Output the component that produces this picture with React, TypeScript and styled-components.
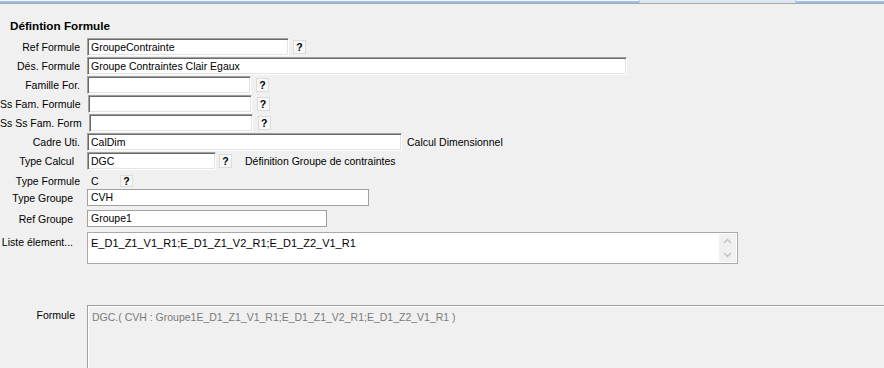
import React from 'react';
import styled, { createGlobalStyle } from 'styled-components';

const GlobalStyle = createGlobalStyle`
    html, body {
        margin: 0;
        padding: 0;
        background: #f0f0f0;
        overflow: hidden;
    }
    body {
        font-family: 'Liberation Sans', Arial, sans-serif;
        font-size: 10.5px;
        color: #000;
    }
`;

const Screen = styled.div`
    width: 884px;
    height: 368px;
    display: flex;
    flex-direction: column;
    background: #f0f0f0;
    overflow: hidden;
`;

const TabStrip = styled.div`
    display: flex;
    height: 3px;
    border-bottom: 1px solid #a7a7a7;
    flex-shrink: 0;
`;

const StripLine = styled.div<{ $width?: number }>`
    flex: ${p => (p.$width ? `0 0 ${p.$width}px` : '1 1 auto')};
    border-top: 1px solid #f7f7f7;
    background: #9dbff0;
`;

const StripTab = styled.div`
    flex: 0 0 155px;
    background: #dde7f3;
    border-left: 1px solid #b8cde6;
    border-right: 1px solid #b8cde6;
`;

const Title = styled.div`
    font-weight: bold;
    font-size: 11.7px;
    padding: 15px 0 0 10px;
    height: 19px;
    line-height: 14px;
`;

const Form = styled.div`
    display: flex;
    flex-direction: column;
`;

const Row = styled.div<{ $top: number; $height?: number }>`
    display: flex;
    align-items: center;
    margin-top: ${p => p.$top}px;
    height: ${p => p.$height ?? 18}px;
`;

const Label = styled.div<{ $shift?: number }>`
    flex: 0 0 80px;
    box-sizing: border-box;
    padding-right: ${p => p.$shift ?? 0}px;
    text-align: right;
    white-space: nowrap;
    margin-right: 7px;
`;

const SunkenField = styled.div<{ $width: number }>`
    box-sizing: border-box;
    width: ${p => p.$width}px;
    height: 18px;
    background: #fff;
    border: 1px solid;
    border-color: #a0a0a0 #ffffff #ffffff #a0a0a0;
    box-shadow: inset 1px 1px 0 #696969, inset -1px -1px 0 #e3e3e3;
    padding: 0 0 0 3px;
    line-height: 16px;
    white-space: nowrap;
    overflow: hidden;
`;

const FlatField = styled.div<{ $width: number }>`
    box-sizing: border-box;
    width: ${p => p.$width}px;
    height: 17px;
    background: #fff;
    border: 1px solid #a0a0a0;
    padding: 0 0 0 3px;
    line-height: 15px;
    white-space: nowrap;
`;

const HelpButton = styled.div<{ $gap: number; $small?: boolean }>`
    box-sizing: border-box;
    margin-left: ${p => p.$gap}px;
    width: 13px;
    height: ${p => (p.$small ? 12 : 14)}px;
    background: #f7f7f7;
    border: 1px solid #dcdcdc;
    font-weight: bold;
    font-size: 10.5px;
    line-height: ${p => (p.$small ? 10 : 12)}px;
    text-align: center;
`;

const Caption = styled.div<{ $gap: number }>`
    margin-left: ${p => p.$gap}px;
    white-space: nowrap;
`;

const Value = styled.div`
    width: 29px;
    padding-left: 4px;
    box-sizing: border-box;
`;

const ListRow = styled.div`
    display: flex;
    align-items: flex-start;
    margin-top: 5px;
`;

const ListLabel = styled(Label)`
    padding-top: 4px;
`;

const ListBox = styled.div`
    box-sizing: border-box;
    width: 651px;
    height: 32px;
    background: #fff;
    border: 1px solid #a9a9a9;
    display: flex;
`;

const ListText = styled.div`
    flex: 1;
    font-size: 11px;
    padding: 3px 0 0 3px;
    line-height: 14px;
`;

const Scroller = styled.div`
    width: 17px;
    margin: 1px 1px 1px 0;
    background: #f0f0f0;
    display: flex;
    flex-direction: column;
    align-items: center;
    justify-content: space-around;
`;

const FormuleRow = styled.div`
    display: flex;
    align-items: flex-start;
    margin-top: 41px;
    flex: 1;
`;

const FormuleLabel = styled(Label)`
    padding-top: 4px;
`;

const FormuleBox = styled.div`
    flex: 1;
    align-self: stretch;
    border-top: 1px solid #a0a0a0;
    border-left: 1px solid #a0a0a0;
    box-shadow: inset 1px 1px 0 #ffffff;
    padding: 4px 0 0 4px;
    color: #7a7a7a;
    white-space: nowrap;
    line-height: 14px;
`;

const Chevron = ({ up }: { up?: boolean }) => (
    <svg width="9" height="6" viewBox="0 0 9 6">
        <path
            d={up ? 'M1 5 L4.5 1.5 L8 5' : 'M1 1 L4.5 4.5 L8 1'}
            fill="none"
            stroke="#c2c2c2"
            strokeWidth="1.4"
        />
    </svg>
);

export default function App() {
    return (
        <Screen>
            <GlobalStyle />
            <TabStrip>
                <StripLine $width={639} />
                <StripTab />
                <StripLine />
            </TabStrip>
            <Title>Défintion Formule</Title>
            <Form>
                <Row $top={0}>
                    <Label>Ref Formule</Label>
                    <SunkenField $width={202}>GroupeContrainte</SunkenField>
                    <HelpButton $gap={4}>?</HelpButton>
                </Row>
                <Row $top={1}>
                    <Label>Dés. Formule</Label>
                    <SunkenField $width={540}>Groupe Contraintes Clair Egaux</SunkenField>
                </Row>
                <Row $top={1}>
                    <Label>Famille For.</Label>
                    <SunkenField $width={164}></SunkenField>
                    <HelpButton $gap={5}>?</HelpButton>
                </Row>
                <Row $top={1}>
                    <Label>Ss Fam. Formule</Label>
                    <SunkenField $width={164}></SunkenField>
                    <HelpButton $gap={5}>?</HelpButton>
                </Row>
                <Row $top={1}>
                    <Label>Ss Ss Fam. Form</Label>
                    <SunkenField $width={164}></SunkenField>
                    <HelpButton $gap={5}>?</HelpButton>
                </Row>
                <Row $top={1}>
                    <Label>Cadre Uti.</Label>
                    <SunkenField $width={315}>CalDim</SunkenField>
                    <Caption $gap={5}>Calcul Dimensionnel</Caption>
                </Row>
                <Row $top={1}>
                    <Label $shift={6}>Type Calcul</Label>
                    <SunkenField $width={129}>DGC</SunkenField>
                    <HelpButton $gap={3}>?</HelpButton>
                    <Caption $gap={13}>Définition Groupe de contraintes</Caption>
                </Row>
                <Row $top={3} $height={16}>
                    <Label>Type Formule</Label>
                    <Value>C</Value>
                    <HelpButton $gap={4} $small>?</HelpButton>
                </Row>
                <Row $top={0} $height={17}>
                    <Label $shift={7}>Type Groupe</Label>
                    <FlatField $width={282}>CVH</FlatField>
                </Row>
                <Row $top={4} $height={17}>
                    <Label $shift={7}>Ref Groupe</Label>
                    <FlatField $width={240}>Groupe1</FlatField>
                </Row>
                <ListRow>
                    <ListLabel $shift={7}>Liste élement...</ListLabel>
                    <ListBox>
                        <ListText>E_D1_Z1_V1_R1;E_D1_Z1_V2_R1;E_D1_Z2_V1_R1</ListText>
                        <Scroller>
                            <Chevron up />
                            <Chevron />
                        </Scroller>
                    </ListBox>
                </ListRow>
            </Form>
            <FormuleRow>
                <FormuleLabel $shift={5}>Formule</FormuleLabel>
                <FormuleBox>DGC.( CVH : Groupe1E_D1_Z1_V1_R1;E_D1_Z1_V2_R1;E_D1_Z2_V1_R1 )</FormuleBox>
            </FormuleRow>
        </Screen>
    );
}
